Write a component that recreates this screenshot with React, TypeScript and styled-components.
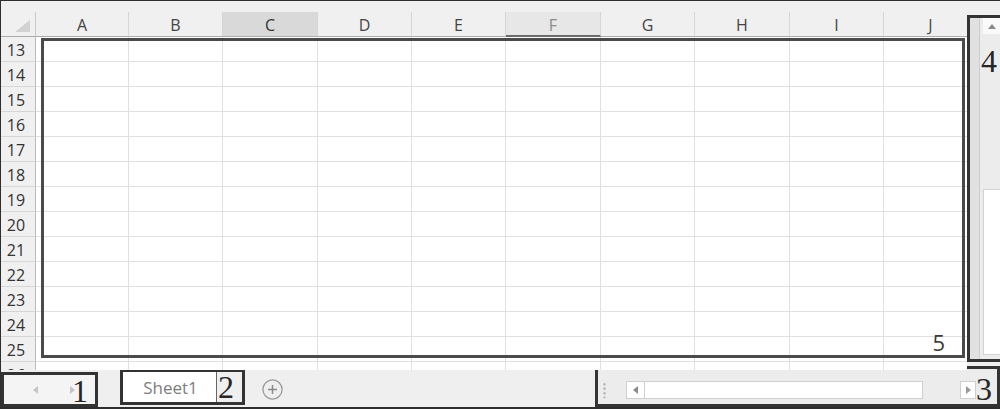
import React from 'react';
import styled, { createGlobalStyle, css } from 'styled-components';

type HeadState = 'plain' | 'selected' | 'active';

const COLUMNS: { label: string; state: HeadState }[] = [
  { label: 'A', state: 'plain' },
  { label: 'B', state: 'plain' },
  { label: 'C', state: 'selected' },
  { label: 'D', state: 'plain' },
  { label: 'E', state: 'plain' },
  { label: 'F', state: 'active' },
  { label: 'G', state: 'plain' },
  { label: 'H', state: 'plain' },
  { label: 'I', state: 'plain' },
  { label: 'J', state: 'plain' },
];

const ROWS = [13, 14, 15, 16, 17, 18, 19, 20, 21, 22, 23, 24, 25, 26];

const GlobalStyle = createGlobalStyle`
  html, body {
    margin: 0;
    padding: 0;
    background: #fff;
  }
  * {
    box-sizing: border-box;
  }
`;

const Frame = styled.div`
  width: 1000px;
  height: 409px;
  overflow: hidden;
  display: flex;
  flex-direction: column;
  background: #efefef;
  border-top: 1px solid #2e2e2e;
  border-left: 1px solid #2e2e2e;
  border-bottom: 2px solid #2e2e2e;
  font-family: "Open Sans", "Noto Sans", sans-serif;
`;

const TopStrip = styled.div`
  flex: none;
  height: 11px;
  background: #f0f0f0;
`;

const Main = styled.div`
  flex: none;
  display: flex;
  height: 358px;
`;

const SheetArea = styled.div`
  position: relative;
  flex: none;
  width: 966px;
  overflow: hidden;
  background: #fff;
`;

const Grid = styled.div`
  display: grid;
  grid-template-columns: 35px 93px 94px 95px 94px 94px 95px 94px 95px 94px 94px;
  grid-auto-rows: 25px;
`;

const Corner = styled.div`
  display: flex;
  align-items: flex-end;
  justify-content: flex-end;
  padding: 0 5px 4px 0;
  background: #f0f0f0;
  border-right: 1px solid #c9c9c9;
  border-bottom: 1px solid #ababab;
`;

const CornerMark = styled.div`
  width: 15px;
  height: 12px;
  background: #d2d2d2;
  clip-path: polygon(100% 0, 100% 100%, 0 100%);
`;

const ColHead = styled.div<{ $state: HeadState }>`
  padding-top: 2px;
  text-align: center;
  font-size: 16px;
  line-height: 22px;
  color: #444;
  background: #f0f0f0;
  border-right: 1px solid #d6d6d6;
  border-bottom: 1px solid #ababab;
  ${({ $state }) =>
    $state === 'selected' &&
    css`
      background: #d9d9d9;
      color: #333;
    `}
  ${({ $state }) =>
    $state === 'active' &&
    css`
      background: #e7e7e7;
      color: #8a8a8a;
      border-bottom: 2px solid #6a6a6a;
    `}
`;

const RowHead = styled.div`
  padding: 2px 4px 0 0;
  text-align: center;
  font-size: 16px;
  line-height: 22px;
  color: #333;
  background: #f0f0f0;
  border-right: 1px solid #bcbcbc;
  border-bottom: 1px solid #d6d6d6;
`;

const Cell = styled.div`
  background: #fff;
  border-right: 1px solid #e0e0e0;
  border-bottom: 1px solid #e0e0e0;
`;

const SheetCallout = styled.div`
  position: absolute;
  left: 40px;
  top: 26px;
  width: 924px;
  height: 320px;
  border: 3px solid #4a4a4a;
`;

const AreaNumber = styled.span`
  position: absolute;
  top: 290px;
  right: 17px;
  font-size: 22px;
  line-height: 1;
  color: #3a3a3a;
`;

const Tag = styled.span`
  font-family: "Liberation Serif", "Times New Roman", serif;
  font-size: 32px;
  line-height: 1;
  color: #262626;
`;

const VScroll = styled.div`
  position: relative;
  flex: none;
  display: flex;
  width: 33px;
  height: 347px;
  margin-top: 3px;
  border: 3px solid #333;
  border-right: 0;
  background: #e4e4e4;
`;

const VGutter = styled.div`
  width: 10px;
  background: #e1e1e1;
  border-right: 1px solid #cdcdcd;
`;

const VTrack = styled.div`
  flex: 1;
  display: flex;
  flex-direction: column;
  padding: 0 0 4px 3px;
  background: #ececec;
`;

const UpButton = styled.div`
  height: 16px;
  display: flex;
  align-items: center;
  justify-content: center;
  background: #fafafa;
`;

const VThumb = styled.div`
  margin-top: auto;
  height: 166px;
  background: #fff;
  border: 1px solid #d2d2d2;
  border-right: 0;
`;

const ScrollTag = styled(Tag)`
  position: absolute;
  top: 27px;
  left: 11px;
`;

const Arrow = styled.span<{ $dir: 'left' | 'right' | 'up'; $color?: string }>`
  width: 0;
  height: 0;
  ${({ $dir, $color = '#8a8a8a' }) =>
    $dir === 'up'
      ? css`
          border-left: 4px solid transparent;
          border-right: 4px solid transparent;
          border-bottom: 5px solid ${$color};
        `
      : $dir === 'left'
      ? css`
          border-top: 4px solid transparent;
          border-bottom: 4px solid transparent;
          border-right: 5px solid ${$color};
        `
      : css`
          border-top: 4px solid transparent;
          border-bottom: 4px solid transparent;
          border-left: 5px solid ${$color};
        `}
`;

const BottomBar = styled.div`
  flex: none;
  display: flex;
  align-items: flex-start;
  height: 37px;
  background: #efefef;
`;

const NavBox = styled.div`
  position: relative;
  display: flex;
  align-items: center;
  gap: 32px;
  width: 97px;
  height: 35px;
  margin-top: 2px;
  padding-left: 29px;
  border: 3px solid #333;
  background: #f4f4f4;
`;

const NavTag = styled(Tag)`
  position: absolute;
  top: 0;
  left: 68px;
`;

const TabBox = styled.div`
  display: flex;
  align-items: stretch;
  height: 36px;
  margin: -1px 0 0 22px;
  border: 3px solid #333;
  background: #efefef;
`;

const SheetTab = styled.div`
  width: 94px;
  display: flex;
  align-items: center;
  justify-content: center;
  padding-left: 2px;
  font-size: 17px;
  color: #7d7d7d;
  background: #fff;
  border-right: 1px solid #666;
`;

const TabTag = styled(Tag)`
  width: 25px;
  padding-left: 1px;
  line-height: 30px;
`;

const AddSheet = styled.div`
  width: 21px;
  height: 21px;
  margin: 9px 0 0 17px;
  display: flex;
`;

const HScrollBox = styled.div`
  display: flex;
  align-items: flex-start;
  width: 405px;
  height: 41px;
  margin: -4px 0 0 auto;
  padding-top: 12px;
  border: 3px solid #333;
  background: #ececec;
`;

const Grip = styled.div`
  width: 3px;
  height: 16px;
  margin: 1px 0 0 5px;
  background: radial-gradient(circle, #b3b3b3 1px, transparent 1.4px) 0 0 / 3px 4.5px;
`;

const HButton = styled.div<{ $width: number; $gap: number }>`
  width: ${({ $width }) => $width}px;
  height: 18px;
  margin-left: ${({ $gap }) => $gap}px;
  display: flex;
  align-items: center;
  justify-content: center;
  background: #fff;
  border: 1px solid #cfcfcf;
`;

const HThumb = styled.div`
  width: 278px;
  height: 18px;
  background: #fff;
  border: 1px solid #cfcfcf;
  border-left: 0;
`;

const HScrollTag = styled(Tag)`
  margin-top: -8px;
`;

const App = () => {
  return (
    <>
      <GlobalStyle />
      <Frame>
        <TopStrip />
        <Main>
          <SheetArea>
            <Grid>
              <Corner>
                <CornerMark />
              </Corner>
              {COLUMNS.map((col) => (
                <ColHead key={col.label} $state={col.state}>
                  {col.label}
                </ColHead>
              ))}
              {ROWS.map((row) => (
                <React.Fragment key={row}>
                  <RowHead>{row}</RowHead>
                  {COLUMNS.map((col) => (
                    <Cell key={col.label} />
                  ))}
                </React.Fragment>
              ))}
            </Grid>
            <SheetCallout>
              <AreaNumber>5</AreaNumber>
            </SheetCallout>
          </SheetArea>
          <VScroll>
            <VGutter />
            <VTrack>
              <UpButton>
                <Arrow $dir="up" />
              </UpButton>
              <VThumb />
            </VTrack>
            <ScrollTag>4</ScrollTag>
          </VScroll>
        </Main>
        <BottomBar>
          <NavBox>
            <Arrow $dir="left" $color="#c4c4c4" />
            <Arrow $dir="right" $color="#c4c4c4" />
            <NavTag>1</NavTag>
          </NavBox>
          <TabBox>
            <SheetTab>Sheet1</SheetTab>
            <TabTag>2</TabTag>
          </TabBox>
          <AddSheet>
            <svg width="21" height="21" viewBox="0 0 21 21">
              <circle cx="10.5" cy="10.5" r="9.6" fill="none" stroke="#9a9a9a" strokeWidth="1.3" />
              <path d="M10.5 6v9M6 10.5h9" stroke="#8a8a8a" strokeWidth="1.5" />
            </svg>
          </AddSheet>
          <HScrollBox>
            <Grip />
            <HButton $width={19} $gap={20}>
              <Arrow $dir="left" />
            </HButton>
            <HThumb />
            <HButton $width={16} $gap={37}>
              <Arrow $dir="right" $color="#9a9a9a" />
            </HButton>
            <HScrollTag>3</HScrollTag>
          </HScrollBox>
        </BottomBar>
      </Frame>
    </>
  );
};

export default App;
